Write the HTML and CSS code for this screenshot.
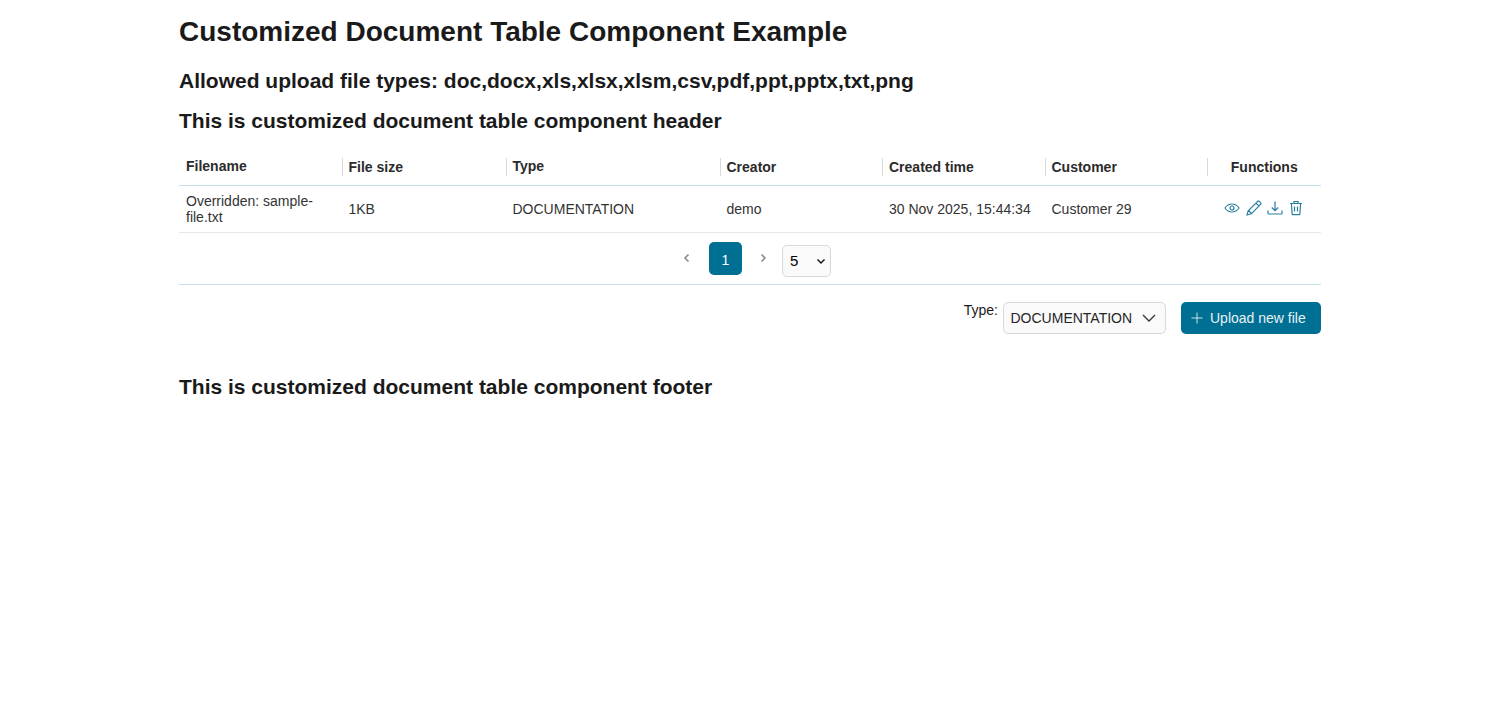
FILE: index.html
```html
<!DOCTYPE html>
<html lang="en">
<head>
    <meta charset="UTF-8">
    <meta name="viewport" content="width=device-width, initial-scale=1.0">
    <title>Customized Document Table Component Example</title>
    <link rel="stylesheet" href="styles.css">
</head>
<body>
    <main class="page">
        <h1>Customized Document Table Component Example</h1>
        <h2 class="allowed">Allowed upload file types: doc,docx,xls,xlsx,xlsm,csv,pdf,ppt,pptx,txt,png</h2>
        <h2 class="table-header">This is customized document table component header</h2>

        <table class="doc-table">
            <thead>
                <tr>
                    <th class="col-name"><span class="raise">Filename</span></th>
                    <th class="col-size sep">File size</th>
                    <th class="col-type sep"><span class="raise">Type</span></th>
                    <th class="col-creator sep">Creator</th>
                    <th class="col-time sep">Created time</th>
                    <th class="col-customer sep">Customer</th>
                    <th class="col-func sep">Functions</th>
                </tr>
            </thead>
            <tbody>
                <tr>
                    <td>Overridden: sample-file.txt</td>
                    <td>1KB</td>
                    <td>DOCUMENTATION</td>
                    <td>demo</td>
                    <td class="col-time">30 Nov 2025, 15:44:34</td>
                    <td>Customer 29</td>
                    <td>
                        <div class="icons">
                            <svg width="16" height="16" viewBox="0 0 16 16"><path d="M1 8c1.800-2.700 4.200-4 7-4s5.200 1.300 7 4c-1.800 2.700-4.200 4-7 4s-5.200-1.300-7-4z"/><circle cx="8" cy="8" r="2"/></svg>
                            <svg width="16" height="16" viewBox="0 0 16 16"><path d="M1 15l1.200-4.300L10 3l3 3-7.700 7.800L1 15zM2.500 10.500l3 3M10.500 2.500l1.300-1.200c.5-.4 1-.4 1.400 0l1.500 1.500c.4.400.4.900 0 1.400L13.500 5.500"/></svg>
                            <svg width="16" height="16" viewBox="0 0 16 16"><path d="M8 1.500v9M4.800 7.500L8 10.700l3.200-3.200M1 10.500v2.700c0 .5.300.8.800.8h12.400c.5 0 .8-.3.800-.8v-2.700"/></svg>
                            <svg width="16" height="16" viewBox="0 0 16 16"><path d="M2 3.500h12M6 3.500V1.500h4v2M3.400 3.500l.7 10.300c0 .5.400.9.900.9h6c.5 0 .9-.4.900-.9l.7-10.300M6.500 6.500v5M9.500 6.500v5"/></svg>
                        </div>
                    </td>
                </tr>
            </tbody>
        </table>

        <div class="pager">
            <svg class="arrow arrow-prev" width="16" height="16" viewBox="0 0 16 16"><path d="M9.500 4.500L6 8l3.500 3.500"/></svg>
            <span class="page-num">1</span>
            <svg class="arrow" width="16" height="16" viewBox="0 0 16 16"><path d="M6.500 4.500L10 8l-3.500 3.500"/></svg>
            <div class="page-size">
                <span>5</span>
                <svg width="10" height="10" viewBox="0 0 10 10"><path d="M1.500 3.500L5 7l3.500-3.500"/></svg>
            </div>
        </div>

        <div class="upload-row">
            <span class="type-label">Type:</span>
            <div class="type-select">
                <span>DOCUMENTATION</span>
                <svg width="14" height="14" viewBox="0 0 14 14"><path d="M1 4l6 6 6-6"/></svg>
            </div>
            <button class="upload-btn">
                <svg width="12" height="12" viewBox="0 0 12 12"><path d="M6 .5v11M.5 6h11"/></svg>
                Upload new file
            </button>
        </div>

        <h2 class="table-footer">This is customized document table component footer</h2>
    </main>
</body>
</html>
```

FILE: styles.css
```css
body {
    margin: 0;
    font-family: "Liberation Sans", Arial, sans-serif;
    font-size: 14px;
    color: #1a1a1a;
    background-color: #fff;
}
.page {
    width: 1142px;
    margin: 0 auto;
    padding-top: 14px;
}
h1 {
    margin: 0;
    font-size: 28px;
    line-height: 36px;
}
h2 {
    margin: 0;
    font-size: 21px;
    line-height: 28px;
}
.allowed {
    margin-top: 17px;
}
.table-header {
    margin-top: 12px;
}
.table-footer {
    margin-top: 39px;
}
.doc-table {
    width: 100%;
    margin-top: 13px;
    border-collapse: collapse;
    table-layout: fixed;
}
.doc-table th {
    position: relative;
    box-sizing: border-box;
    height: 37px;
    padding: 2px 6px 0 6.500px;
    text-align: left;
    font-size: 14px;
    color: #2b2b2b;
    border-bottom: 1px solid #c5e0e8;
}
.doc-table td {
    box-sizing: border-box;
    height: 47px;
    padding: 0 6px 0 6.500px;
    line-height: 16px;
    color: #333;
    border-bottom: 1px solid #e8e8e8;
}
.doc-table th.col-name,
.doc-table th.col-time,
.doc-table td.col-time,
.doc-table td:first-child {
    padding-left: 7px;
}
.raise {
    position: relative;
    top: -1px;
}
.sep::before {
    content: "";
    position: absolute;
    left: 0;
    top: 10px;
    height: 18px;
    border-left: 1px solid #d9d9d9;
}
.col-name { width: 163px; }
.col-size { width: 164px; }
.col-type { width: 214px; }
.col-creator { width: 162px; }
.col-time { width: 163px; }
.col-customer { width: 162px; }
.doc-table .col-func { text-align: center; }
.icons {
    display: flex;
    justify-content: center;
    gap: 5.300px;
    position: relative;
    top: -1px;
}
.icons svg {
    fill: none;
    stroke: #2a7f9e;
    stroke-width: 1.200;
}
.pager {
    display: flex;
    align-items: center;
    justify-content: center;
    gap: 13px;
    height: 51px;
    padding-left: 10px;
    border-bottom: 1px solid #c5e0e8;
}
.arrow {
    fill: none;
    stroke: #8c8c8c;
    stroke-width: 1.600;
    margin-top: 0;
}
.arrow-prev {
    margin-right: 1px;
}
.page-num {
    width: 33px;
    height: 33px;
    line-height: 36px;
    text-align: center;
    color: #fff;
    background-color: #006f94;
    border-radius: 5px;
    margin-top: 1px;
}
.page-size {
    display: flex;
    align-items: center;
    justify-content: space-between;
    box-sizing: border-box;
    width: 49px;
    height: 32px;
    padding: 0 4px 0 7px;
    margin: 5px 0 0 -2px;
    background-color: #fafafa;
    border: 1px solid #d9d9d9;
    border-radius: 5px;
    color: #000;
    font-size: 15px;
}
.page-size svg {
    fill: none;
    stroke: #1a1a1a;
    stroke-width: 1.500;
}
.upload-row {
    display: flex;
    justify-content: flex-end;
    align-items: flex-start;
    margin-top: 17px;
}
.type-label {
    margin-right: 5px;
    line-height: 16px;
}
.type-select {
    display: flex;
    align-items: center;
    box-sizing: border-box;
    width: 163px;
    height: 32px;
    padding: 0 9px 0 6.500px;
    justify-content: space-between;
    background-color: #fafafa;
    border: 1px solid #d9d9d9;
    border-radius: 5px;
    color: #262626;
}
.type-select svg {
    fill: none;
    stroke: #333;
    stroke-width: 1.300;
}
.upload-btn {
    display: flex;
    align-items: center;
    gap: 7px;
    width: 140px;
    height: 32px;
    margin-left: 15px;
    padding: 0 10px;
    font: inherit;
    color: #e6f2f6;
    background-color: #006f94;
    border: none;
    border-radius: 5px;
}
.upload-btn svg {
    fill: none;
    stroke: #cfe3ea;
    stroke-width: 1;
}
```
